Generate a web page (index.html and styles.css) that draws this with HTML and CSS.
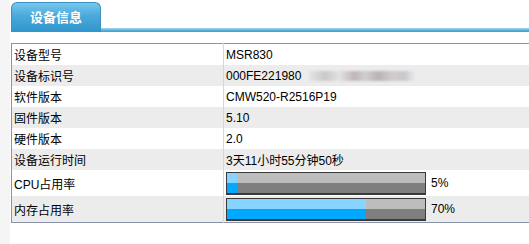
FILE: index.html
```html
<!DOCTYPE html>
<html lang="zh-CN">
<head>
<meta charset="utf-8">
<title>设备信息</title>
<link rel="stylesheet" href="styles.css">
</head>
<body>
<div class="page">
  <div class="side"></div>
  <div class="main">
    <div class="tabbar">
      <div class="tab">设备信息</div>
      <div class="tabline"></div>
    </div>
    <table class="info">
      <tr><td class="k">设备型号</td><td class="v">MSR830</td></tr>
      <tr class="alt"><td class="k">设备标识号</td><td class="v">000FE221980<span class="blur"></span></td></tr>
      <tr><td class="k">软件版本</td><td class="v">CMW520-R2516P19</td></tr>
      <tr class="alt"><td class="k">固件版本</td><td class="v">5.10</td></tr>
      <tr><td class="k">硬件版本</td><td class="v">2.0</td></tr>
      <tr class="alt"><td class="k">设备运行时间</td><td class="v">3天11小时55分钟50秒</td></tr>
      <tr class="bar-row"><td class="k">CPU占用率</td><td class="v"><div class="meter"><div class="bar"><div class="fill" style="width:5%"></div></div><span class="pct">5%</span></div></td></tr>
      <tr class="alt bar-row"><td class="k">内存占用率</td><td class="v"><div class="meter"><div class="bar"><div class="fill" style="width:70%"></div></div><span class="pct">70%</span></div></td></tr>
    </table>
  </div>
</div>
</body>
</html>
```
FILE: styles.css
```css
html, body {
  margin: 0;
  padding: 0;
  background: #ffffff;
  overflow: hidden;
  font-family: "Liberation Sans", "Noto Sans CJK SC", sans-serif;
  font-size: 12px;
  color: #000;
}
.page {
  display: flex;
  height: 244px;
}
.side {
  width: 10px;
  flex: none;
  background: #f5f5f5;
}
.main {
  flex: 1;
  padding-left: 1px;
  padding-top: 2px;
  min-width: 0;
}
.tabbar {
  display: flex;
  align-items: flex-end;
  height: 30px;
}
.tab {
  flex: none;
  width: 88px;
  height: 29px;
  border: 1px solid #3a90c0;
  border-bottom: none;
  border-radius: 6px 6px 0 0;
  background: linear-gradient(#78c6ec, #4aa9da 45%, #2f95cc);
  color: #fff;
  font-weight: bold;
  font-size: 13px;
  line-height: 29px;
  text-align: center;
  box-sizing: content-box;
}
.tabline {
  flex: 1;
  height: 4px;
  background: linear-gradient(#a6d8f0, #5eb5de 50%, #3d9dd0);
}
.info {
  margin-top: 11px;
  border-collapse: collapse;
  width: 100%;
  border-top: 1px solid #8b93aa;
  border-bottom: 1px solid #8b93aa;
  border-left: 1px solid #8b93aa;
}
.info td {
  height: 21px;
  padding: 0 0 0 2px;
  vertical-align: middle;
  white-space: nowrap;
}
.info tr.bar-row td {
  height: 26px;
}
.info td.k {
  width: 209px;
  border-right: 1px solid #d6d6d6;
}
.info tr.alt td {
  background: #ececec;
}
.blur {
  display: inline-block;
  width: 108px;
  height: 10px;
  margin-left: 8px;
  vertical-align: middle;
  background: linear-gradient(90deg, #e4e4e4, #c9c9c9 15%, #e2e2e2 28%, #bfb6ba 42%, #cfcfcf 52%, #b9b2b6 64%, #d0cdd0 78%, #c8c8cc 88%, #f0f0f0);
  filter: blur(1.2px);
}
.meter {
  display: flex;
  align-items: center;
}
.bar {
  width: 198px;
  height: 20px;
  border: 1px solid #3a3a3a;
  border-bottom-width: 2px;
  box-sizing: content-box;
  background: linear-gradient(#bdbdbd 0, #bdbdbd 50%, #7f7f7f 50%, #7f7f7f 100%);
  flex: none;
}
.fill {
  height: 100%;
  background: linear-gradient(#86d4ff 0, #86d4ff 50%, #00a8ff 50%, #00a8ff 100%);
}
.pct {
  margin-left: 5px;
}
```
